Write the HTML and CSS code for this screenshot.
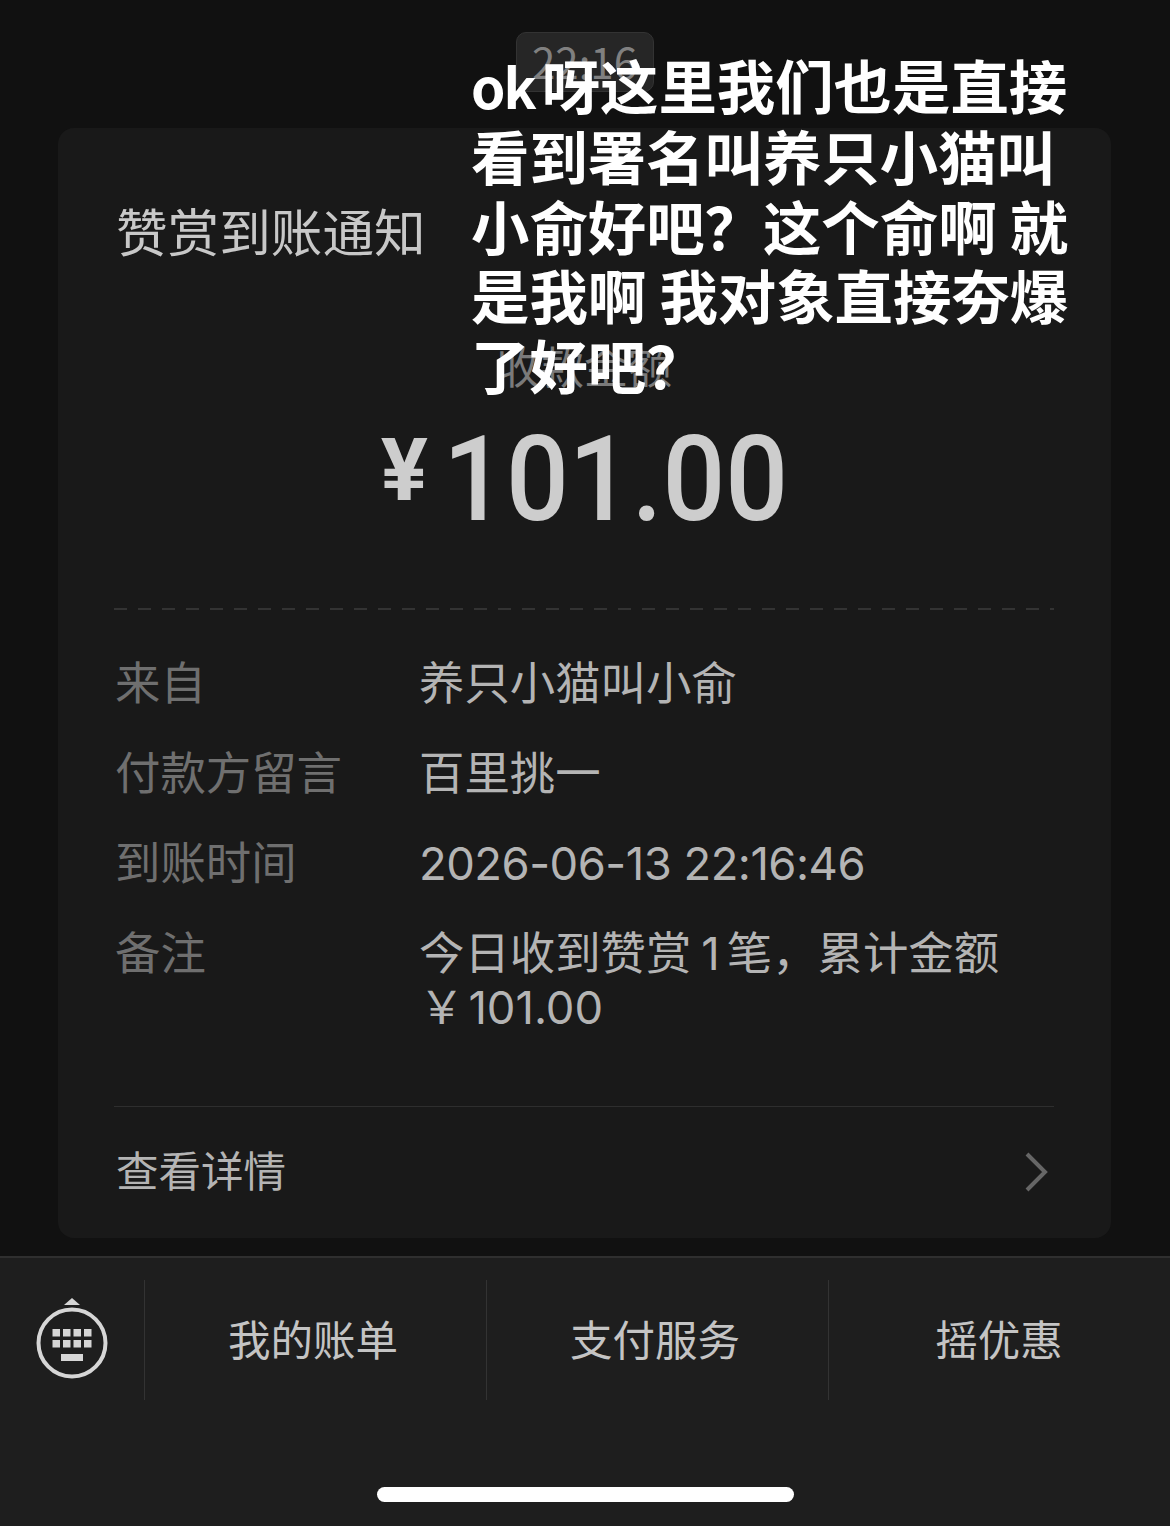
FILE: index.html
```html
<!DOCTYPE html>
<html lang="zh-CN">
<head>
  <meta charset="UTF-8" />
  <title>赞赏到账通知</title>
  <link rel="stylesheet" href="styles.css">
</head>
<body>
  <main class="chat">
    <div class="time-row"><span class="time">22:16</span></div>

    <section class="card">
      <h1 class="card-title">赞赏到账通知</h1>
      <p class="amount-label">收款金额</p>
      <p class="amount"><span class="amount-sign">¥</span><span class="amount-num">101.00</span></p>
      <div class="dash"></div>

      <div class="rows">
        <div class="row"><span class="row-key">来自</span><span class="row-val">养只小猫叫小俞</span></div>
        <div class="row"><span class="row-key">付款方留言</span><span class="row-val">百里挑一</span></div>
        <div class="row"><span class="row-key">到账时间</span><span class="row-val row-date">2026-06-13 22:16:46</span></div>
        <div class="row"><span class="row-key">备注</span><span class="row-val">今日收到赞赏<span class="note-count">1</span>笔，累计金额<br>￥<span class="note-sum">101.00</span></span></div>
      </div>

      <div class="detail">
        <span class="detail-text">查看详情</span>
        <svg class="chevron" width="24" height="40" viewBox="0 0 24 40"><path d="M3 2 L21 20 L3 38" fill="none" stroke="#666" stroke-width="4"/></svg>
      </div>
    </section>
  </main>

  <footer class="bar">
    <div class="menu">
      <div class="kb-cell">
        <svg width="72" height="82" viewBox="0 0 72 82">
          <path d="M36 0 L44 7 L28 7 Z" fill="#d6d6d6"/>
          <circle cx="36" cy="45" r="33.5" fill="none" stroke="#d6d6d6" stroke-width="4"/>
          <g fill="#d6d6d6">
            <rect x="16.5" y="31" width="7.5" height="7.5"/><rect x="27" y="31" width="7.5" height="7.5"/><rect x="37.5" y="31" width="7.5" height="7.5"/><rect x="48" y="31" width="7.5" height="7.5"/>
            <rect x="16.5" y="42" width="7.5" height="7.5"/><rect x="27" y="42" width="7.5" height="7.5"/><rect x="37.5" y="42" width="7.5" height="7.5"/><rect x="48" y="42" width="7.5" height="7.5"/>
            <rect x="25" y="56" width="22" height="7"/>
          </g>
        </svg>
      </div>
      <div class="menu-item">我的账单</div>
      <div class="menu-item">支付服务</div>
      <div class="menu-item menu-last">摇优惠</div>
    </div>
    <div class="home"></div>
  </footer>

  <p class="caption"><span class="caption-latin">ok</span>呀这里我们也是直接<br>看到署名叫养只小猫叫<br>小俞好吧？这个俞啊 就<br>是我啊 我对象直接夯爆<br>了好吧？</p>
</body>
</html>
```

FILE: styles.css
```css
* {
  box-sizing: border-box;
}
html, body {
  margin: 0;
  padding: 0;
}
body {
  width: 1170px;
  height: 1526px;
  overflow: hidden;
  background: #111111;
  font-family: "Noto Sans CJK SC", sans-serif;
  color: #b4b4b4;
}
p, h1 {
  margin: 0;
  font-weight: 400;
}
.chat {
  height: 1256px;
  padding: 32px 59px 0 58px;
}
.time-row {
  display: flex;
  justify-content: center;
  height: 96px;
}
.time {
  width: 138px;
  height: 60px;
  border: 1px solid #333333;
  border-radius: 10px;
  background: #262626;
  color: #808080;
  font-size: 42px;
  line-height: 56px;
  text-align: center;
}
.card {
  height: 1110px;
  padding: 0 57px 0 56px;
  border-radius: 16px;
  background: #191919;
}
.card-title {
  padding: 68px 0 0 2px;
  height: 210px;
  font-size: 51.6px;
  line-height: 68px;
  color: #c8c8c8;
}
.amount-label {
  height: 54px;
  font-size: 44px;
  line-height: 54px;
  text-align: center;
  color: #7a7a7a;
}
.amount {
  display: flex;
  justify-content: center;
  height: 216px;
  padding-top: 18px;
  font-family: Roboto, sans-serif;
  font-size: 119px;
  font-weight: 500;
  line-height: 140px;
  color: #cdcdcd;
}
.amount-sign {
  margin-right: 2px;
  font-size: 88px;
  font-weight: 700;
  line-height: 120px;
}
.amount-num {
  display: inline-block;
  margin-right: -14px;
  transform: scaleX(0.93);
}
.dash {
  height: 2px;
  background: repeating-linear-gradient(to right, #333333 0 13px, transparent 13px 24px);
}
.rows {
  display: flex;
  flex-direction: column;
  height: 496px;
  padding-top: 47px;
}
.row {
  display: flex;
  padding-left: 1px;
  margin-bottom: 36px;
  font-family: Inter, "Noto Sans CJK SC", sans-serif;
  font-size: 45.4px;
  line-height: 54px;
}
.row-key {
  flex: 0 0 304px;
  color: #6f6f6f;
}
.row-val {
  color: #b4b4b4;
}
.row-date {
  letter-spacing: -0.5px;
}
.note-count {
  margin: 0 7px 0 10px;
}
.note-sum {
  margin-left: 4px;
}
.detail {
  display: flex;
  align-items: center;
  justify-content: space-between;
  height: 132px;
  padding: 0 6px 0 2px;
  border-top: 1px solid #2e2e2e;
  font-size: 42.5px;
  color: #b4b4b4;
}
.detail-text {
  margin-bottom: 8px;
}
.chevron {
  margin-bottom: 2px;
}
.bar {
  height: 270px;
  border-top: 2px solid #2f2f2f;
  background: #1e1e1e;
}
.menu {
  display: grid;
  grid-template-columns: 144px 342px 342px 342px;
  padding-top: 22px;
  height: 142px;
}
.kb-cell {
  display: flex;
  justify-content: center;
  padding-top: 18px;
}
.menu-item {
  padding-right: 5px;
  border-left: 1px solid #333333;
  font-size: 42.5px;
  line-height: 115px;
  text-align: center;
  color: #c4c4c4;
}
.menu-last {
  padding-right: 1px;
}
.home {
  width: 417px;
  height: 15px;
  margin: 87px 0 0 377px;
  border-radius: 8px;
  background: #ffffff;
}
.caption {
  position: absolute;
  left: 471px;
  top: 49px;
  font-size: 58.4px;
  font-weight: 700;
  line-height: 69.4px;
  color: #ffffff;
  white-space: nowrap;
}
.caption-latin {
  font-size: 55px;
  letter-spacing: -2px;
  margin-right: 7px;
}
```
